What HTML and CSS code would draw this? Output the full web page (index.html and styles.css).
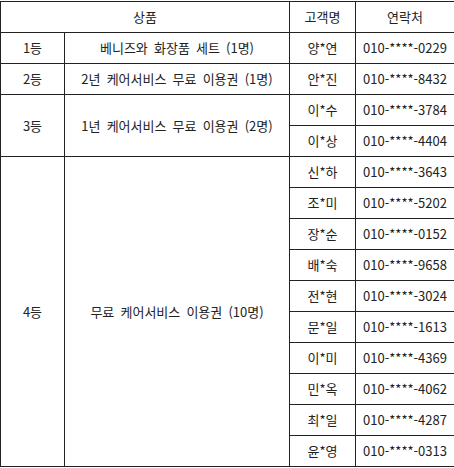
FILE: index.html
```html
<!DOCTYPE html>
<html lang="ko">
<head>
<meta charset="utf-8">
<link rel="stylesheet" href="styles.css">
</head>
<body>
<table class="prize">
  <colgroup>
    <col class="c-rank">
    <col class="c-item">
    <col class="c-name">
    <col class="c-phone">
  </colgroup>
  <thead>
    <tr><th colspan="2">상품</th><th>고객명</th><th>연락처</th></tr>
  </thead>
  <tbody>
    <tr><td>1등</td><td>베니즈와 화장품 세트 (1명)</td><td>양*연</td><td>010-****-0229</td></tr>
    <tr><td>2등</td><td>2년 케어서비스 무료 이용권 (1명)</td><td>안*진</td><td>010-****-8432</td></tr>
    <tr><td rowspan="2">3등</td><td rowspan="2">1년 케어서비스 무료 이용권 (2명)</td><td>이*수</td><td>010-****-3784</td></tr>
    <tr><td>이*상</td><td>010-****-4404</td></tr>
    <tr><td rowspan="10">4등</td><td rowspan="10">무료 케어서비스 이용권 (10명)</td><td>신*하</td><td>010-****-3643</td></tr>
    <tr><td>조*미</td><td>010-****-5202</td></tr>
    <tr><td>장*순</td><td>010-****-0152</td></tr>
    <tr><td>배*숙</td><td>010-****-9658</td></tr>
    <tr><td>전*현</td><td>010-****-3024</td></tr>
    <tr><td>문*일</td><td>010-****-1613</td></tr>
    <tr><td>이*미</td><td>010-****-4369</td></tr>
    <tr><td>민*옥</td><td>010-****-4062</td></tr>
    <tr><td>최*일</td><td>010-****-4287</td></tr>
    <tr><td>윤*영</td><td>010-****-0313</td></tr>
  </tbody>
</table>
</body>
</html>
```
FILE: styles.css
```css
html, body {
  margin: 0;
  padding: 0;
  background: #fff;
}
body {
  padding-top: 1px;
}
.prize {
  border-collapse: collapse;
  table-layout: fixed;
  width: 454px;
  font-family: "Noto Sans CJK KR", "Noto Sans", sans-serif;
  font-size: 13px;
  color: #222;
  word-spacing: 2.5px;
}
.c-rank { width: 64px; }
.c-item { width: 225px; }
.c-name { width: 66px; }
.c-phone { width: 99px; }
.prize th,
.prize td {
  border: 1px solid #222;
  height: 30px;
  padding: 0;
  text-align: center;
  vertical-align: middle;
  font-weight: normal;
  line-height: 16px;
}
```
